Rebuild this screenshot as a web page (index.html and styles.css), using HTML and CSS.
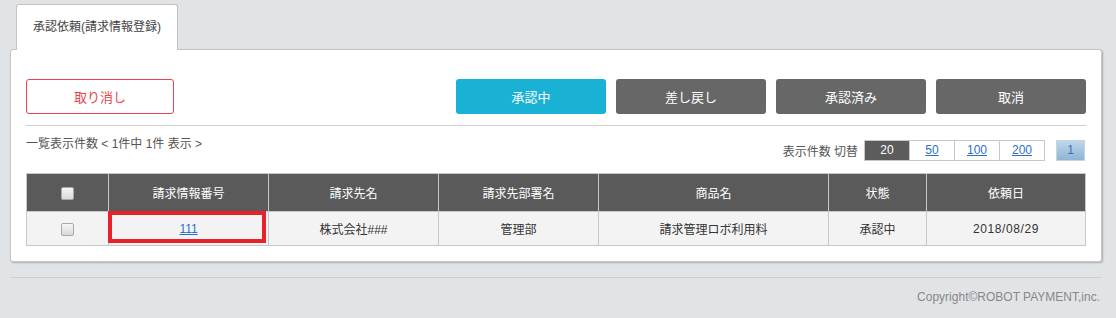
FILE: index.html
```html
<!DOCTYPE html>
<html lang="ja">
<head>
    <meta charset="UTF-8">
    <title>承認依頼(請求情報登録)</title>
    <link rel="stylesheet" href="styles.css">
</head>
<body>
    <div class="page">
        <div class="tabs">
            <div class="tab active">承認依頼(請求情報登録)</div>
        </div>
        <div class="panel">
            <div class="toolbar">
                <button class="btn btn-cancel">取り消し</button>
                <div class="status-buttons">
                    <button class="btn btn-active">承認中</button>
                    <button class="btn btn-dark">差し戻し</button>
                    <button class="btn btn-dark">承認済み</button>
                    <button class="btn btn-dark">取消</button>
                </div>
            </div>
            <div class="list-info">
                <div class="count">一覧表示件数 &lt; 1件中 1件 表示 &gt;</div>
                <div class="pager">
                    <span class="pager-label">表示件数 切替</span>
                    <div class="per-page">
                        <span class="current">20</span>
                        <a href="#">50</a>
                        <a href="#">100</a>
                        <a href="#">200</a>
                    </div>
                    <span class="page-num">1</span>
                </div>
            </div>
            <table class="list">
                <thead>
                    <tr>
                        <th class="col-check"><input type="checkbox"></th>
                        <th class="col-no">請求情報番号</th>
                        <th class="col-name">請求先名</th>
                        <th class="col-dept">請求先部署名</th>
                        <th class="col-item">商品名</th>
                        <th class="col-state">状態</th>
                        <th class="col-date">依頼日</th>
                    </tr>
                </thead>
                <tbody>
                    <tr>
                        <td><input type="checkbox"></td>
                        <td class="marked"><a href="#">111</a></td>
                        <td>株式会社###</td>
                        <td>管理部</td>
                        <td>請求管理ロボ利用料</td>
                        <td>承認中</td>
                        <td class="date">2018/08/29</td>
                    </tr>
                </tbody>
            </table>
        </div>
        <div class="footer">Copyright©ROBOT PAYMENT,inc.</div>
    </div>
</body>
</html>
```

FILE: styles.css
```css
html, body {
    margin: 0;
    padding: 0;
    background: #e1e4e7;
}
body {
    font-family: "Liberation Sans", "Noto Sans CJK JP", sans-serif;
    font-size: 12px;
    color: #333;
}
.page {
    width: 1092px;
    margin-left: 10px;
    padding-top: 4px;
}
.tabs {
    display: flex;
    padding-left: 6px;
    position: relative;
    z-index: 1;
}
.tab {
    width: 160px;
    height: 45px;
    line-height: 45px;
    text-align: center;
    background: #fff;
    border: 1px solid #c2c2c2;
    border-bottom: none;
    border-radius: 3px 3px 0 0;
    color: #444;
    font-size: 12px;
}
.panel {
    background: #fff;
    border: 1px solid #c6c6c6;
    border-radius: 3px;
    box-shadow: 1px 1px 2px rgba(0, 0, 0, 0.25);
    padding: 29px 15px 15px 15px;
    margin-top: -1px;
}
.toolbar {
    display: flex;
    justify-content: space-between;
    padding-bottom: 11px;
    border-bottom: 1px solid #cfcfcf;
}
.status-buttons {
    display: flex;
    gap: 10px;
}
.btn {
    width: 150px;
    height: 35px;
    border-radius: 3px;
    font-family: inherit;
    font-size: 13px;
    cursor: pointer;
    padding: 0;
}
.btn-cancel {
    width: 148px;
    background: #fff;
    border: 1px solid #e8444c;
    color: #e8444c;
}
.btn-active {
    background: #19b1d4;
    border: none;
    color: #fff;
}
.btn-dark {
    background: #676767;
    border: none;
    color: #fff;
}
.list-info {
    display: flex;
    justify-content: space-between;
    align-items: flex-start;
    height: 47px;
}
.count {
    margin-top: 10px;
    line-height: 16px;
    color: #555;
}
.pager {
    display: flex;
    align-items: center;
    margin-top: 14px;
    margin-right: 1px;
}
.pager-label {
    color: #555;
    margin-right: 6px;
}
.per-page {
    display: flex;
}
.per-page a, .per-page span {
    width: 44px;
    height: 19px;
    line-height: 19px;
    text-align: center;
    border: 1px solid #c8c8c8;
    margin-left: -1px;
    color: #2a6fc9;
    background: #fff;
}
.per-page .current {
    margin-left: 0;
    background: #5c5c5c;
    border-color: #c8c8c8;
    color: #fff;
}
.page-num {
    width: 27px;
    height: 19px;
    line-height: 19px;
    text-align: center;
    margin-left: 11px;
    border: 1px solid #c9d3dc;
    background: linear-gradient(#bcd7ec, #8fb4d6);
    color: #3e6fa3;
}
.list {
    width: 100%;
    border-collapse: collapse;
}
.list th, .list td {
    border: 1px solid #c8c8c8;
    text-align: center;
    padding: 0;
    font-weight: normal;
}
.list th {
    height: 37px;
    background: #5a5a5a;
    color: #fff;
}
.list td {
    height: 33px;
    background: #f3f3f3;
    color: #333;
}
.list td.date {
    letter-spacing: 0.6px;
}
.col-check { width: 81px; }
.col-no { width: 159px; }
.col-name { width: 169px; }
.col-dept { width: 159px; }
.col-item { width: 229px; }
.col-state { width: 97px; }
a {
    color: #2a6fc9;
}
.list td.marked {
    position: relative;
}
.list td.marked::after {
    content: "";
    position: absolute;
    left: -1px;
    top: -1px;
    width: 158px;
    height: 32px;
    border: 4px solid #e8212b;
    box-sizing: border-box;
}
input[type="checkbox"] {
    appearance: none;
    -webkit-appearance: none;
    width: 13px;
    height: 13px;
    margin: 0;
    vertical-align: middle;
    border: 1px solid #a9a9a9;
    border-radius: 2px;
    background: linear-gradient(#f6f6f6, #d9d9d9);
}
.footer {
    margin-top: 15px;
    border-top: 1px solid #cdd0d3;
    text-align: right;
    padding: 12px 2px 0 0;
    color: #888;
    font-size: 12px;
}
```
